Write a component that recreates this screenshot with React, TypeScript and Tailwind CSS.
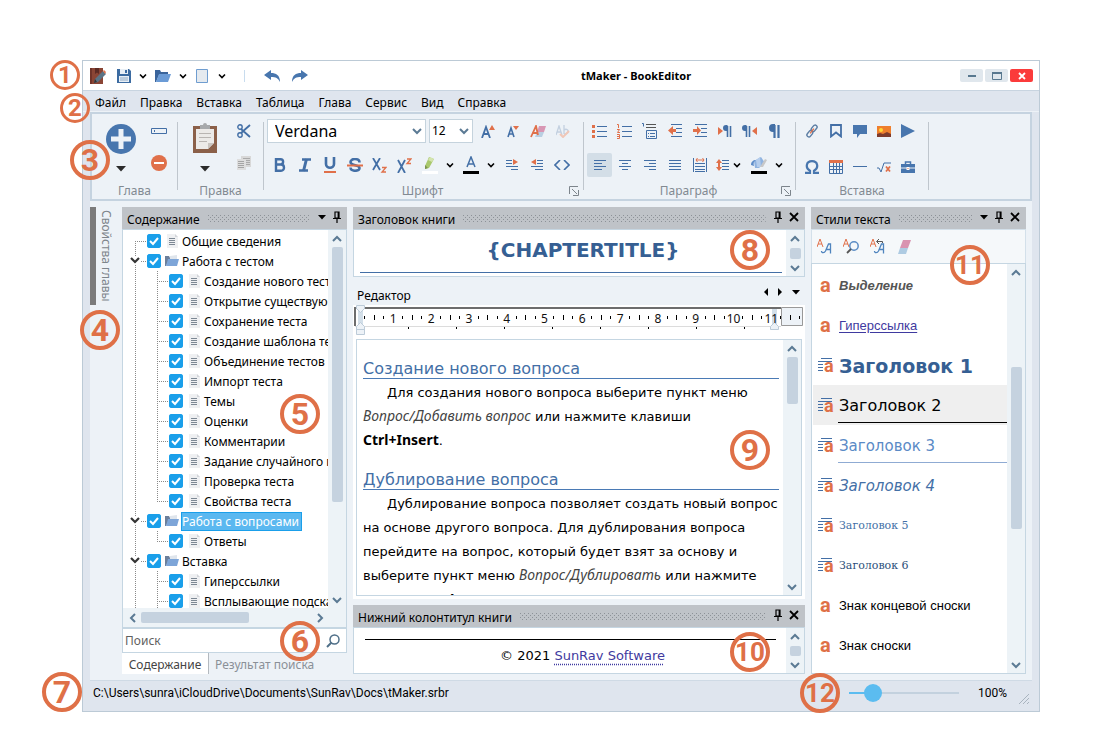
import { useState } from "react";
import type { ReactNode } from "react";
import clsx from "clsx";

const Icon = ({
  w = 16,
  h = 16,
  children,
}: {
  w?: number;
  h?: number;
  children: ReactNode;
}) => (
  <svg
    width={w}
    height={h}
    viewBox={`0 0 ${w} ${h}`}
    fill="none"
    className="shrink-0"
    aria-hidden="true"
  >
    {children}
  </svg>
);

const BLUE = "#436fa6";
const ORANGE = "#e0704a";

const Badge = ({ n, className }: { n: number; className: string }) => (
  <span
    className={clsx(
      "pointer-events-none absolute z-20 flex items-center justify-center rounded-full border-[#df7047] font-[Roboto,sans-serif] font-bold leading-none text-[#df7047]",
      n < 3 ? "size-[30px] border-3 text-2xl" : "size-10 border-4",
      n >= 3 && n < 10 && "text-[32px]",
      n >= 10 && "text-[26px]",
      className,
    )}
  >
    {n}
  </span>
);

/* small chevrons and glyphs */

const Chevron = ({
  dir = "down",
  color = "#5b7a94",
}: {
  dir?: "up" | "down" | "left" | "right";
  color?: string;
}) => {
  const d = {
    down: "M1 3l4 4 4-4",
    up: "M1 7l4-4 4 4",
    left: "M7 1L3 5l4 4",
    right: "M3 1l4 4-4 4",
  }[dir];
  return (
    <Icon w={10} h={10}>
      <path d={d} stroke={color} strokeWidth="2" />
    </Icon>
  );
};

const Drop = () => (
  <Icon w={8} h={8}>
    <path d="M1 2.5l3 3 3-3" stroke="#000" strokeWidth="1.6" />
  </Icon>
);

const Caret = () => (
  <Icon w={8} h={5}>
    <path d="M0 0h8L4 4.500z" fill="#000" />
  </Icon>
);

const BigCaret = () => (
  <Icon w={10} h={6}>
    <path d="M0 0h10L5 5.500z" fill="#2b2b2b" />
  </Icon>
);

const Pin = () => (
  <Icon w={8} h={12}>
    <path d="M2 1h4v6H2zM5.2 1v6M0 7.5h8M4 8v4" stroke="#000" strokeWidth="1.2" />
  </Icon>
);

const Cross = () => (
  <Icon w={10} h={10}>
    <path d="M1 1l8 8M9 1L1 9" stroke="#000" strokeWidth="1.8" />
  </Icon>
);

const Tool = ({
  label,
  active,
  className = "h-6 w-[25px]",
  children,
}: {
  label: string;
  active?: boolean;
  className?: string;
  children: ReactNode;
}) => (
  <button
    type="button"
    aria-label={label}
    className={clsx(
      "flex shrink-0 items-center justify-center rounded-xs",
      active && "bg-[#d3dee7]",
      className,
    )}
  >
    {children}
  </button>
);

/* horizontal strokes used by most paragraph icons: [x1, x2, y] */
const Lines = ({ rows, color = BLUE }: { rows: number[][]; color?: string }) => (
  <>
    {rows.map(([a, b, y]) => (
      <path key={`${a}-${y}`} d={`M${a} ${y}.5H${b}`} stroke={color} />
    ))}
  </>
);

const BookIcon = () => (
  <Icon>
    <path d="M0 0h13v16H0z" fill="#8a4535" />
    <path d="M0 0h2v16H0z" fill="#6f3329" />
    <path d="M5 0h4v6L7 4.500 5 6z" fill="#5b2a24" />
    <path d="M4 15l1-4 8-8 3 3-8 8z" fill="#5b7385" />
    <path d="M13 3l1-1 2 2-1 2z" fill="#e0704a" />
    <path d="M4 15l1-4 2 3z" fill="#333" />
  </Icon>
);

const SaveIcon = () => (
  <Icon w={14} h={14}>
    <path d="M0 0h12l2 2v12H0z" fill="#3c6ba1" />
    <path d="M3 0h8v5H3z" fill="#e8eff6" />
    <path d="M8 1h2v3H8z" fill="#3c6ba1" />
    <path d="M2 7h10v6H2z" fill="#e8eff6" />
    <path d="M3 9h8M3 11h8" stroke="#8fa9c4" />
  </Icon>
);

const FolderIcon = () => (
  <Icon w={16} h={12}>
    <path d="M0 0h5l1 2h7v3H4L1 12H0z" fill="#3a649b" />
    <path d="M4 4h12l-3 8H1z" fill="#6b9bd6" />
  </Icon>
);

const ChapterIcon = () => (
  <Icon w={14} h={12}>
    <path d="M0 1h4l1 2h6v2H4L1 11H0z" fill="#6c7f9b" />
    <path d="M5 1l7-1v5H5z" fill="#dfe5ec" />
    <path d="M3 4h11l-2 7H1z" fill="#7da5d8" />
  </Icon>
);

const PageIcon = () => (
  <Icon w={12} h={14}>
    <path d="M.5.500H11.500V13.500H.5z" fill="#e5eaef" stroke="#6f9dd0" />
  </Icon>
);

const DocIcon = () => (
  <Icon w={12} h={14}>
    <path d="M1 0h8l3 3v11H1z" fill="#eff0f2" />
    <path d="M9 0l3 3H9z" fill="#d3d6da" />
    <path d="M3 4.500h6M3 6.500h6M3 8.500h6M3 10.500h6" stroke="#7d8894" />
  </Icon>
);

const UndoIcon = ({ flip }: { flip?: boolean }) => (
  <Icon w={16} h={12}>
    <g transform={flip ? "translate(16 0) scale(-1 1)" : undefined}>
      <path d="M0 5l7-5v3c5 0 9 2 9 9-2-4-4-5-9-5v3z" fill="#4876ae" />
    </g>
  </Icon>
);

const TitleBar = () => (
  <header className="relative flex h-[30px] shrink-0 items-center border-b border-[#c8d4e0] bg-white pl-[7px] pr-[6px]">
    <Badge n={1} className="-left-[33px] -top-px" />
    <BookIcon />
    <div className="ml-[11px] flex items-center gap-2">
      <button type="button" aria-label="Сохранить">
        <SaveIcon />
      </button>
      <Drop />
      <button type="button" aria-label="Открыть">
        <FolderIcon />
      </button>
      <Drop />
      <button type="button" aria-label="Создать" className="ml-px mr-[2px]">
        <PageIcon />
      </button>
      <Drop />
    </div>
    <span className="ml-[18px] h-3 w-px bg-[#c8dcee]" />
    <button type="button" aria-label="Отменить" className="ml-[19px]">
      <UndoIcon />
    </button>
    <button type="button" aria-label="Повторить" className="ml-3">
      <UndoIcon flip />
    </button>
    <h1 className="flex-1 pl-1 pt-px text-center text-[11px] font-bold">
      tMaker - BookEditor
    </h1>
    <div className="flex gap-[2px]">
      <button
        type="button"
        aria-label="Свернуть"
        className="flex h-[13px] w-[23px] items-center justify-center rounded-xs bg-[#e0e7ed]"
      >
        <Icon w={8} h={8}>
          <path d="M0 4h8" stroke="#58788f" strokeWidth="2" />
        </Icon>
      </button>
      <button
        type="button"
        aria-label="Развернуть"
        className="flex h-[13px] w-[23px] items-center justify-center rounded-xs bg-[#e0e7ed]"
      >
        <Icon w={10} h={8}>
          <path d="M.5 1h9v6.500h-9z" stroke="#58788f" />
          <path d="M0 1h10" stroke="#58788f" strokeWidth="2" />
        </Icon>
      </button>
      <button
        type="button"
        aria-label="Закрыть"
        className="flex h-[13px] w-[23px] items-center justify-center rounded-xs bg-[#fb3b3b]"
      >
        <Icon w={8} h={8}>
          <path d="M1 1l6 6M7 1L1 7" stroke="#fff" strokeWidth="1.800" />
        </Icon>
      </button>
    </div>
  </header>
);

const menu = ["Файл", "Правка", "Вставка", "Таблица", "Глава", "Сервис", "Вид", "Справка"];

const MenuBar = () => (
  <nav className="relative flex h-[21px] shrink-0 items-center gap-[14px] border-b border-[#edf2f7] pl-3 pt-[3px]">
    <Badge n={2} className="-left-[23px] top-[2px]" />
    {menu.map((item) => (
      <a key={item} href="#" className="leading-4">
        {item}
      </a>
    ))}
  </nav>
);

const Group = ({
  title,
  launcher,
  className,
  children,
}: {
  title: string;
  launcher?: boolean;
  className: string;
  children: ReactNode;
}) => (
  <>
    <section className={clsx("flex shrink-0 flex-col pt-[5px]", className)}>
      {children}
      <div className="flex h-[22px] items-center justify-center pt-[5px] text-[#828a92]">
        <h2 className={clsx(launcher && "flex-1 pl-3 text-center")}>{title}</h2>
        {launcher && (
          <button type="button" aria-label={`${title}: параметры`} className="mr-1">
            <Icon w={10} h={10}>
              <path d="M.5 8V.5H9M3 3l5 5M9.500 4v5.500H4" stroke="#7d858c" />
            </Icon>
          </button>
        )}
      </div>
    </section>
    <span className="mb-[9px] mt-2 w-px shrink-0 bg-[#bfc6cd]" />
  </>
);

const Ribbon = () => (
  <div className="relative mx-[7px] flex shrink-0 border-2 border-[#c5d3e0] bg-[#edf2f7]">
    <Badge n={3} className="-left-[22px] top-[26px]" />

    <Group title="Глава" className="w-[85px]">
      <div className="flex h-[58px] gap-[10px] pl-[14px]">
        <button
          type="button"
          aria-label="Добавить главу"
          className="flex flex-col items-center gap-3 pt-[5px]"
        >
          <Icon w={30} h={30}>
            <circle cx="15" cy="15" r="15" fill="#4876ae" />
            <path d="M15 5v20M5 15h20" stroke="#edf2f7" strokeWidth="5" />
          </Icon>
          <BigCaret />
        </button>
        <div className="flex flex-col gap-2">
          <Tool label="Свойства">
            <Icon w={16} h={6}>
              <path d="M.5.500h15v5H.5zM3.500 2v2" stroke={BLUE} />
            </Icon>
          </Tool>
          <Tool label="Удалить главу">
            <Icon>
              <circle cx="8" cy="8" r="8" fill={ORANGE} />
              <path d="M3 8h10" stroke="#fff" strokeWidth="2" />
            </Icon>
          </Tool>
        </div>
      </div>
    </Group>

    <Group title="Правка" className="w-[85px]">
      <div className="flex h-[58px] gap-[13px] pl-[14px]">
        <button
          type="button"
          aria-label="Вставить"
          className="flex flex-col items-center gap-[13px] pt-1"
        >
          <Icon w={26} h={30}>
            <path d="M1 3h24v27H1z" fill="#8b6049" />
            <path d="M4 6h18v14l-6 6H4z" fill="#eceae8" />
            <path d="M22 20h-6v6z" fill="#c9c4c0" />
            <path d="M7 10.500h12M7 14.500h12M7 18.500h8" stroke="#b9b5b2" />
            <path d="M8 2h3a2 2 0 014 0h3v4H8z" fill="#a6a9ac" />
          </Icon>
          <BigCaret />
        </button>
        <div className="flex flex-col gap-2">
          <Tool label="Вырезать">
            <Icon w={14} h={14}>
              <path d="M13 1L4 9M13 13L4 5" stroke={BLUE} strokeWidth="1.800" />
              <circle cx="3" cy="3" r="2.200" stroke={BLUE} strokeWidth="1.400" />
              <circle cx="3" cy="11" r="2.200" stroke={BLUE} strokeWidth="1.400" />
            </Icon>
          </Tool>
          <Tool label="Копировать">
            <Icon w={14} h={14}>
              <path d="M4 0h10v11H4z" fill="#d8d8d8" />
              <path d="M6 2.500h7M6 4.500h7M6 6.500h7M6 8.500h7" stroke="#aaa" />
              <path d="M0 3h9v11H0z" fill="#dedede" />
              <path d="M1 5.500h6M1 7.500h6M1 9.500h6M1 11.500h6" stroke="#a5a5a5" />
            </Icon>
          </Tool>
        </div>
      </div>
    </Group>

    <Group title="Шрифт" launcher className="w-[319px]">
      <div className="flex h-6 pl-[3px]">
        <label className="relative mr-[3px] w-[159px]">
          <select
            aria-label="Шрифт"
            className="h-6 w-full appearance-none border border-[#c5d3dd] bg-white pl-[7px] text-base leading-none"
          >
            <option>Verdana</option>
          </select>
          <span className="pointer-events-none absolute right-1 top-[7px]">
            <Chevron />
          </span>
        </label>
        <label className="relative mr-[2px] w-11">
          <select
            aria-label="Размер"
            className="h-6 w-full appearance-none border border-[#c5d3dd] bg-white pl-[2px] leading-none"
          >
            <option>12</option>
          </select>
          <span className="pointer-events-none absolute right-1 top-[7px]">
            <Chevron />
          </span>
        </label>
        <Tool label="Увеличить шрифт">
          <Icon w={14} h={13}>
            <path d="M1 13L5 2l4 11M2 9h6" stroke={BLUE} strokeWidth="1.800" />
            <path d="M8 5l3-5 3 5z" fill={ORANGE} />
          </Icon>
        </Tool>
        <Tool label="Уменьшить шрифт">
          <Icon w={12} h={13}>
            <path d="M1 12L4 3l3 9M2 9h4" stroke={BLUE} strokeWidth="1.600" />
            <path d="M6 1h6L9 5z" fill={ORANGE} />
          </Icon>
        </Tool>
        <Tool label="Очистить формат">
          <Icon w={16} h={13}>
            <path d="M9 1h7l-2 6H7z" fill="#d897b4" />
            <path d="M7 7h7l-2 5H5z" fill="#b9cfe2" />
            <path d="M1 12L6 1l2 9M3 8h5" stroke={ORANGE} strokeWidth="1.800" />
          </Icon>
        </Tool>
        <Tool label="Проверка">
          <Icon w={14} h={13}>
            <path d="M0 10L3 1l3 9M1 7h4M8 0v9M8 5c4-3 7 4 0 4" stroke="#c3d0e0" strokeWidth="1.300" />
            <path d="M4 9l3 3 6-6" stroke="#f0c7b8" strokeWidth="2" />
          </Icon>
        </Tool>
      </div>
      <div className="mt-[10px] flex h-6 pl-[3px]">
        <Tool label="Полужирный">
          <Icon w={12} h={14}>
            <path
              d="M2 1.200h4.500c3.500 0 3.500 5.300 0 5.300H2h5c4 0 4 6.300 0 6.300H2z"
              stroke={BLUE}
              strokeWidth="2.400"
            />
          </Icon>
        </Tool>
        <Tool label="Курсив">
          <Icon w={12} h={14}>
            <path d="M3 1.500h9M0 12.500h9" stroke={BLUE} strokeWidth="2.400" />
            <path d="M7.500 1L4.500 13" stroke={BLUE} strokeWidth="3" />
          </Icon>
        </Tool>
        <Tool label="Подчёркнутый">
          <Icon w={12} h={16}>
            <path d="M2 0v7c0 5 8 5 8 0V0" stroke={BLUE} strokeWidth="2.600" />
            <path d="M0 15h12" stroke={ORANGE} strokeWidth="2" />
          </Icon>
        </Tool>
        <Tool label="Зачёркнутый">
          <Icon w={16} h={14}>
            <path
              d="M12.500 4.500C12.500 0 3.500 0 3.500 4s9 2.500 9 6-9 4-9-.5"
              stroke={BLUE}
              strokeWidth="2.600"
            />
            <path d="M0 7.500h16" stroke={ORANGE} strokeWidth="2" />
          </Icon>
        </Tool>
        <Tool label="Нижний индекс">
          <Icon w={15} h={15}>
            <path d="M1 0l7 12M8 0L1 12" stroke={BLUE} strokeWidth="1.800" />
            <path d="M10 9.500h4l-4 4.500h4" stroke={ORANGE} strokeWidth="1.300" />
          </Icon>
        </Tool>
        <Tool label="Верхний индекс">
          <Icon w={15} h={15}>
            <path d="M1 2l7 13M8 2L1 15" stroke={BLUE} strokeWidth="1.800" />
            <path d="M10 1h4l-4 4.500h4" stroke={ORANGE} strokeWidth="1.300" />
          </Icon>
        </Tool>
        <Tool label="Цвет выделения">
          <Icon w={16} h={18}>
            <path d="M7 1l5 2-5 9-4 1 0-3z" fill="#a9c86c" />
            <path d="M8 1l4 2-2 3-4-2z" fill="#d3e4ae" />
            <path d="M3 9l3 3-3 1z" fill="#7d9350" />
            <path d="M0 15h16v3H0z" fill="#fff" />
          </Icon>
        </Tool>
        <Tool label="Выбрать цвет выделения" className="h-6 w-4">
          <Drop />
        </Tool>
        <Tool label="Цвет текста">
          <Icon w={16} h={18}>
            <path d="M4 11L8 1l4 10M5 8h6" stroke={BLUE} strokeWidth="1.500" />
            <path d="M0 15h16v3H0z" fill="#000" />
          </Icon>
        </Tool>
        <Tool label="Выбрать цвет текста" className="h-6 w-4">
          <Drop />
        </Tool>
        <Tool label="Отступ справа">
          <Icon w={12} h={12}>
            <Lines rows={[[0, 6, 1], [0, 6, 4], [0, 12, 7], [5, 12, 10]]} />
            <path d="M7 0l5 3-5 3z" fill={ORANGE} />
          </Icon>
        </Tool>
        <Tool label="Отступ слева">
          <Icon w={12} h={12}>
            <Lines rows={[[6, 12, 1], [6, 12, 4], [0, 12, 7], [4, 12, 10]]} />
            <path d="M5 0L0 3l5 3z" fill={ORANGE} />
          </Icon>
        </Tool>
        <Tool label="Код">
          <Icon w={16} h={10}>
            <path d="M6 0L1 5l5 5M10 0l5 5-5 5" stroke={BLUE} strokeWidth="1.600" />
          </Icon>
        </Tool>
      </div>
    </Group>

    <Group title="Параграф" launcher className="w-[211px]">
      <div className="flex h-6 pl-[3px]">
        <Tool label="Маркированный список">
          <Icon w={15} h={13}>
            <Lines rows={[[5, 15, 1], [5, 15, 6], [5, 15, 11]]} />
            <path d="M0 0h3v3H0zM0 5h3v3H0zM0 10h3v3H0z" fill={ORANGE} />
          </Icon>
        </Tool>
        <Tool label="Нумерованный список">
          <Icon w={15} h={15}>
            <Lines rows={[[5, 15, 2], [5, 15, 7], [5, 15, 12]]} />
            <path
              d="M0 .5h1.500V4M0 5.500h2.500L.5 8.500h2.500M0 10.500h2.500v4H0M0 12.500h2.500"
              stroke={ORANGE}
            />
          </Icon>
        </Tool>
        <Tool label="Многоуровневый список">
          <Icon w={15} h={16}>
            <path d="M0 .5h1.500v3" stroke={BLUE} />
            <Lines rows={[[4, 14, 1], [4, 14, 4]]} color="#555" />
            <path d="M4.500 7.500h10v8h-10z" stroke={BLUE} />
            <path d="M6 10.500h1M8 10.500h5M6 13.500h1M8 13.500h5" stroke={BLUE} />
          </Icon>
        </Tool>
        <Tool label="Уменьшить отступ">
          <Icon w={14} h={14}>
            <Lines rows={[[3, 14, 0], [8, 14, 4], [8, 14, 8], [3, 14, 12]]} />
            <path d="M0 6.500L5 2v3h3v3H5v3z" fill={ORANGE} />
          </Icon>
        </Tool>
        <Tool label="Увеличить отступ">
          <Icon w={14} h={14}>
            <Lines rows={[[2, 14, 0], [8, 14, 4], [8, 14, 8], [2, 14, 12]]} />
            <path d="M8 6.500L4 2v3H0v3h4v3z" fill={ORANGE} />
          </Icon>
        </Tool>
        <Tool label="Слева направо">
          <Icon w={14} h={12}>
            <path d="M0 2l5 4-5 4z" fill={ORANGE} />
            <path d="M14 0H8a3 3 0 000 6h1.500V0z" fill={BLUE} />
            <path d="M9.500 1v11M12.500 1v11" stroke={BLUE} strokeWidth="1.600" />
          </Icon>
        </Tool>
        <Tool label="Справа налево">
          <Icon w={15} h={12}>
            <path d="M15 2l-5 4 5 4z" fill={ORANGE} />
            <path d="M9 0H3a3 3 0 000 6h1.500V0z" fill={BLUE} />
            <path d="M4.500 1v11M7.500 1v11" stroke={BLUE} strokeWidth="1.600" />
          </Icon>
        </Tool>
        <Tool label="Непечатаемые знаки">
          <Icon w={12} h={14}>
            <path d="M12 0H4a4 4 0 000 8h2V0z" fill={BLUE} />
            <path d="M5.500 1v13M9.500 1v13" stroke={BLUE} strokeWidth="2.200" />
          </Icon>
        </Tool>
      </div>
      <div className="mt-[10px] flex h-6 pl-[3px]">
        <Tool label="По левому краю" active>
          <Icon w={12} h={11}>
            <Lines rows={[[0, 12, 0], [0, 8, 3], [0, 12, 6], [0, 8, 9]]} />
          </Icon>
        </Tool>
        <Tool label="По центру">
          <Icon w={12} h={11}>
            <Lines rows={[[0, 12, 0], [3, 9, 3], [0, 12, 6], [3, 9, 9]]} />
          </Icon>
        </Tool>
        <Tool label="По правому краю">
          <Icon w={12} h={11}>
            <Lines rows={[[0, 12, 0], [5, 12, 3], [0, 12, 6], [5, 12, 9]]} />
          </Icon>
        </Tool>
        <Tool label="По ширине">
          <Icon w={12} h={11}>
            <Lines rows={[[0, 12, 0], [0, 12, 3], [0, 12, 6], [0, 12, 9]]} />
          </Icon>
        </Tool>
        <Tool label="Поля">
          <Icon w={14} h={14}>
            <path d="M.5 0v14M13.500 0v14" stroke={BLUE} />
            <path d="M3 2h8M4.500 0L3 2l1.500 2M9.500 0L11 2 9.500 4" stroke={ORANGE} />
            <Lines rows={[[2, 12, 5], [2, 12, 8], [2, 12, 11], [2, 12, 13]]} />
          </Icon>
        </Tool>
        <Tool label="Интервал" className="h-6 w-5">
          <Icon w={13} h={12}>
            <path d="M0 4l3-4 3 4H4v4h2l-3 4-3-4h2V4z" fill={ORANGE} />
            <Lines rows={[[6, 13, 1], [6, 13, 4], [6, 13, 7], [6, 13, 10]]} />
          </Icon>
        </Tool>
        <Tool label="Выбрать интервал" className="mr-1 h-6 w-[10px]">
          <Drop />
        </Tool>
        <Tool label="Заливка">
          <Icon w={16} h={18}>
            <path d="M3 5l7-4 4 6-6 5H4z" fill="#8fb3e0" />
            <path d="M5 4l4-3 1 10H6z" fill="#b4cdec" />
            <path d="M9 11l5-8 2 1-4 7z" fill="#c8c8c8" />
            <path d="M0 9c0-3 2-5 5-5-2 1-3 3-2 6z" fill="#5d8cc8" />
            <path d="M0 15h16v3H0z" fill="#000" />
          </Icon>
        </Tool>
        <Tool label="Выбрать заливку" className="h-6 w-4">
          <Drop />
        </Tool>
      </div>
    </Group>

    <Group title="Вставка" className="w-[132px]">
      <div className="flex h-6 pl-1">
        <Tool label="Ссылка" className="h-6 w-6">
          <Icon w={12} h={14}>
            <g transform="rotate(38 6 7)" stroke="#5b7da3" strokeWidth="1.400">
              <rect x="4" y="0" width="4" height="7" rx="2" />
              <rect x="4" y="7" width="4" height="7" rx="2" />
              <path d="M6 4v6" stroke={ORANGE} />
            </g>
          </Icon>
        </Tool>
        <Tool label="Закладка" className="h-6 w-6">
          <Icon w={12} h={14}>
            <path d="M1 1h10v11.500L6 8.500l-5 4z" stroke={BLUE} strokeWidth="1.800" />
          </Icon>
        </Tool>
        <Tool label="Комментарий" className="h-6 w-6">
          <Icon w={14} h={13}>
            <path d="M0 0h14v9H7l-3 4V9H0z" fill="#4876ae" />
          </Icon>
        </Tool>
        <Tool label="Рисунок" className="h-6 w-6">
          <Icon w={14} h={11}>
            <path d="M0 0h14v11H0z" fill="#ef7f2d" />
            <circle cx="4" cy="4" r="2" fill="#ffd633" />
            <path d="M0 8l3-1 3 1 4-2 4 2v3H0z" fill="#7e3b2c" />
          </Icon>
        </Tool>
        <Tool label="Видео" className="h-6 w-6">
          <Icon w={14} h={14}>
            <path d="M0 0l14 7-14 7z" fill="#4876ae" />
          </Icon>
        </Tool>
      </div>
      <div className="mt-[14px] flex h-5 pl-1">
        <Tool label="Символ" className="h-5 w-6">
          <Icon w={14} h={14}>
            <path
              d="M0 12.800h5v-2C0 8 1 1.200 7 1.200s7 6.800 2 9.600v2h5"
              stroke="#4876ae"
              strokeWidth="2.200"
            />
          </Icon>
        </Tool>
        <Tool label="Таблица" className="h-5 w-6">
          <Icon w={14} h={14}>
            <path
              d="M.5 1v12.500h13V1M4.500 3v10M7.500 3v10M10.500 3v10M0 6.500h14M0 9.500h14"
              stroke={BLUE}
            />
            <path d="M0 1.500h14" stroke={ORANGE} strokeWidth="3" />
          </Icon>
        </Tool>
        <Tool label="Линия" className="h-5 w-6">
          <Icon w={14} h={2}>
            <path d="M0 .5h14" stroke={BLUE} />
          </Icon>
        </Tool>
        <Tool label="Формула" className="h-5 w-6">
          <Icon w={14} h={11}>
            <path d="M0 6h2l2 4 3-9h7" stroke={BLUE} />
            <path d="M9 4.500l4 5M13 4.500l-4 5" stroke={ORANGE} strokeWidth="1.800" />
          </Icon>
        </Tool>
        <Tool label="Компонент" className="h-5 w-6">
          <Icon w={14} h={12}>
            <path d="M4.500 3V1h5v2" stroke="#4876ae" strokeWidth="1.500" />
            <path d="M0 3h14v9H0z" fill="#4876ae" />
            <path d="M0 7h14" stroke="#edf2f7" />
            <path d="M5.500 6h3v3h-3z" fill="#fff" />
            <path d="M6.500 7h1v1h-1z" fill={ORANGE} />
          </Icon>
        </Tool>
      </div>
    </Group>
  </div>
);

/* docked panels */

const Grip = ({ id }: { id: string }) => (
  <svg className="h-[7px] min-w-0 flex-1" aria-hidden="true">
    <pattern id={id} width="4" height="4" patternUnits="userSpaceOnUse">
      <path d="M0 0h1v1H0zM2 2h1v1H2z" fill="#8d9298" />
    </pattern>
    <rect width="100%" height="100%" fill={`url(#${id})`} />
  </svg>
);

const PanelHeader = ({
  title,
  id,
  menu,
  close,
}: {
  title: string;
  id: string;
  menu?: boolean;
  close?: boolean;
}) => (
  <div className="flex h-[22px] shrink-0 items-center gap-2 bg-[#bfc3c8] pl-[5px] pr-[6px]">
    <h2 className="pt-[3px] leading-4">{title}</h2>
    <Grip id={id} />
    <div className="flex items-center gap-[7px] pb-[2px]">
      {menu && (
        <button type="button" aria-label="Меню">
          <Caret />
        </button>
      )}
      <button type="button" aria-label="Закрепить">
        <Pin />
      </button>
      {close && (
        <button type="button" aria-label="Закрыть панель">
          <Cross />
        </button>
      )}
    </div>
  </div>
);

const ScrollBar = ({
  space = 0,
  thumb,
}: {
  space?: number;
  thumb: number;
}) => (
  <div className="flex w-[18px] shrink-0 flex-col items-center justify-between bg-[#edf3f7] pb-[3px] pt-1">
    <Chevron dir="up" />
    <div className="flex w-full flex-1 flex-col items-center py-[3px]">
      <span style={{ flexGrow: space }} />
      <span
        className="w-[11px] rounded-xs bg-[#c5d2df]"
        style={{ flexGrow: thumb }}
      />
      <span style={{ flexGrow: 100 - space - thumb }} />
    </div>
    <Chevron dir="down" />
  </div>
);

type Node = { title: string; children?: string[]; selected?: boolean };

const tree: Node[] = [
  { title: "Общие сведения" },
  {
    title: "Работа с тестом",
    children: [
      "Создание нового теста",
      "Открытие существующего теста",
      "Сохранение теста",
      "Создание шаблона теста",
      "Объединение тестов",
      "Импорт теста",
      "Темы",
      "Оценки",
      "Комментарии",
      "Задание случайного порядка",
      "Проверка теста",
      "Свойства теста",
    ],
  },
  { title: "Работа с вопросами", children: ["Ответы"], selected: true },
  { title: "Вставка", children: ["Гиперссылки", "Всплывающие подсказки", "Рисунки"] },
];

const Guide = ({ path, open }: { path: string; open?: boolean }) => (
  <Icon w={22} h={20}>
    <path d={path} stroke="#8a8a8a" strokeDasharray="1 1" />
    {open && (
      <>
        <path d="M6 5h10v9H6z" fill="#fff" />
        <path d="M7 7l4 4 4-4" stroke="#333" strokeWidth="2.200" />
      </>
    )}
  </Icon>
);

const Check = ({ label }: { label: string }) => (
  <span className="grid size-[14px] shrink-0">
    <input
      type="checkbox"
      defaultChecked
      aria-label={label}
      className="peer col-start-1 row-start-1 size-[14px] appearance-none rounded-[3px] bg-white ring-1 ring-[#1a9fea] ring-inset checked:bg-[#1a9fea]"
    />
    <svg
      viewBox="0 0 14 14"
      fill="none"
      className="pointer-events-none invisible col-start-1 row-start-1 size-[14px] peer-checked:visible"
    >
      <path d="M3 7l3 3 5-6" stroke="#fff" strokeWidth="2" />
    </svg>
  </span>
);

const TreeItem = ({
  title,
  folder,
  selected,
}: {
  title: string;
  folder?: boolean;
  selected?: boolean;
}) => (
  <span className="ml-px flex items-center">
    <Check label={title} />
    <span className="ml-1 mr-[3px] flex w-[14px] justify-center">
      {folder ? <ChapterIcon /> : <DocIcon />}
    </span>
    <span
      className={clsx(
        "pr-[2px] pt-px leading-4",
        selected && "bg-[#5bb8f0] text-white outline outline-[#1a9fea]",
      )}
    >
      {title}
    </span>
  </span>
);

const Tree = () => (
  <ul className="min-w-0 flex-1 overflow-hidden whitespace-nowrap pl-px pt-px">
    {tree.map((node, i) => (
      <li key={node.title}>
        <div className="flex h-5 items-center">
          <Guide
            path={i === 0 ? "M11.500 10v10M11 10.500h11" : "M11.500 0v20M11 10.500h11"}
            open={Boolean(node.children)}
          />
          <TreeItem
            title={node.title}
            folder={Boolean(node.children)}
            selected={node.selected}
          />
        </div>
        {node.children && (
          <ul>
            {node.children.map((child, j) => (
              <li key={child} className="flex h-5 items-center">
                <Guide path="M11.500 0v20" />
                <Guide
                  path={
                    j === node.children!.length - 1
                      ? "M11.500 0v11M11 10.500h11"
                      : "M11.500 0v20M11 10.500h11"
                  }
                />
                <TreeItem title={child} />
              </li>
            ))}
          </ul>
        )}
      </li>
    ))}
  </ul>
);

const ContentsPanel = () => (
  <section className="relative flex w-[225px] shrink-0 flex-col">
    <Badge n={5} className="right-[27px] top-[187px]" />
    <PanelHeader title="Содержание" id="grip-contents" menu />
    <div className="flex min-h-0 flex-1 flex-col border border-[#c5d6e2] bg-white">
      <div className="flex min-h-0 flex-1">
        <Tree />
        <ScrollBar thumb={74} />
      </div>
      <div className="flex h-[19px] shrink-0 items-center bg-[#edf3f7] pl-[5px] pr-[21px]">
        <Chevron dir="left" />
        <div className="flex flex-1 px-[3px]">
          <span className="h-[11px] w-[108px] rounded-xs bg-[#c5d2df]" />
        </div>
        <Chevron dir="right" />
      </div>
    </div>
    <form className="relative flex h-[25px] shrink-0 items-center border border-[#c5d6e2] bg-white pr-[6px]">
      <Badge n={6} className="-top-2 right-[26px]" />
      <input
        type="search"
        aria-label="Поиск"
        placeholder="Поиск"
        className="min-w-0 flex-1 pl-[2px] placeholder:text-[#5f5f5f]"
      />
      <button type="button" aria-label="Найти">
        <Icon w={14} h={14}>
          <circle cx="8.500" cy="5.500" r="4.500" stroke="#4f6f88" strokeWidth="1.500" />
          <path d="M5.500 8.500L1 13" stroke="#4f6f88" strokeWidth="2" />
        </Icon>
      </button>
    </form>
    <div role="tablist" className="flex h-[21px] shrink-0 leading-5">
      <button
        type="button"
        role="tab"
        aria-selected="true"
        className="w-[87px] border-r border-[#b3b9bf] bg-white pt-[3px] leading-4 text-[#444]"
      >
        Содержание
      </button>
      <button
        type="button"
        role="tab"
        aria-selected="false"
        className="pl-[6px] pt-[3px] leading-4 text-[#8a9097]"
      >
        Результат поиска
      </button>
    </div>
  </section>
);

const Ruler = () => {
  const marks = Array.from({ length: 46 }, (_, i) => i + 1);
  const tabs = Array.from({ length: 8 }, (_, i) => i);
  return (
    <svg
      viewBox="0 0 452 32"
      className="h-8 w-full shrink-0"
      preserveAspectRatio="xMinYMin meet"
      role="img"
      aria-label="Линейка"
    >
      <path d="M428 2h22v19h-22z" fill="#edf2f7" />
      <path d="M428.500 2.500h21v18h-21z" fill="none" stroke="#999" />
      <path d="M2 21V3h426" fill="none" stroke="#6d6d6d" strokeWidth="2" />
      <path d="M2 21.500h426" stroke="#dcdcdc" />
      <path d="M5 2h5v26H5zM419 4h5v17h-5z" fill="#d3dfe9" />
      <path
        d="M3.500.500h8v3l-4 4-4-4zM3.500 29.500v-8l4-4 4 4v8zM3.500 24.500h8"
        fill="#edf2f7"
        stroke="#bccbd8"
      />
      <path d="M417.500 24.500v-3l4-4 4 4v3z" fill="#edf2f7" stroke="#bccbd8" />
      {marks.map((i) => {
        const x = 2.5 + i * 9.45;
        if (i % 4 === 0)
          return (
            <text
              key={i}
              x={x}
              y={18}
              fontSize="12"
              textAnchor="middle"
              fill="#111"
            >
              {i / 4}
            </text>
          );
        const half = i % 2 === 0;
        return (
          <rect
            key={i}
            x={Math.round(x - 0.5)}
            y={half ? 10 : 11}
            width="1"
            height={half ? 5 : 3}
            fill="#000"
          />
        );
      })}
      <path d="M446.500 11v3" stroke="#000" />
      {tabs.map((i) => (
        <rect key={i} x={55 + i * 48} y={22} width="1" height="2" fill="#000" />
      ))}
    </svg>
  );
};

const verdana = "font-['DejaVu_Sans',sans-serif]";
const chapterHeading =
  "border-b border-[#4a7ab5] pt-1 text-base leading-[18px] text-[#436fa6]";
const menuPath = "font-['Noto_Sans',sans-serif] text-sm leading-none text-[#444]";

const EditorPanel = () => (
  <section className="relative flex min-h-0 flex-1 flex-col">
    <div className="flex h-7 shrink-0 items-center pl-1 pr-[5px]">
      <h2 className="flex-1 pt-[10px] leading-4">Редактор</h2>
      <div className="flex items-center gap-[10px] pt-[2px]">
        <button type="button" aria-label="Назад">
          <Icon w={4} h={8}>
            <path d="M4 0v8L0 4z" fill="#000" />
          </Icon>
        </button>
        <button type="button" aria-label="Вперёд">
          <Icon w={4} h={8}>
            <path d="M0 0v8l4-4z" fill="#000" />
          </Icon>
        </button>
        <button type="button" aria-label="Список">
          <Caret />
        </button>
      </div>
    </div>
    <div className="relative flex min-h-0 flex-1 flex-col bg-white pb-[3px]">
      <Badge n={9} className="right-[35px] top-[125px]" />
      <Ruler />
      <div className="mx-[3px] mt-[2px] flex min-h-0 flex-1 border border-[#c5d6e2]">
        <article
          className={clsx(
            "min-w-0 flex-1 overflow-hidden whitespace-nowrap pl-[6px] pr-1 pt-4 text-[13px] leading-6",
            verdana,
          )}
        >
          <h3 className={chapterHeading}>Создание нового вопроса</h3>
          <p className="pt-[2px] indent-6">
            Для создания нового вопроса выберите пункт меню
            <br />
            <em className={menuPath}>Вопрос/Добавить вопрос</em> или нажмите клавиши
            <br />
            <strong className="font-['Noto_Sans',sans-serif] text-sm leading-none">
              Ctrl+Insert
            </strong>
            .
          </p>
          <h3 className={clsx("mt-[14px]", chapterHeading)}>Дублирование вопроса</h3>
          <p className="pt-[2px] indent-6">
            Дублирование вопроса позволяет создать новый вопрос
            <br />
            на основе другого вопроса. Для дублирования вопроса
            <br />
            перейдите на вопрос, который будет взят за основу и
            <br />
            выберите пункт меню <em className={menuPath}>Вопрос/Дублировать</em> или
            нажмите
            <br />
            клавиши <strong>Ctrl+D</strong>.
          </p>
        </article>
        <ScrollBar thumb={21} />
      </div>
    </div>
  </section>
);

const Center = () => (
  <main className="flex min-w-0 flex-1 flex-col">
    <section className="relative shrink-0">
      <Badge n={8} className="right-[35px] top-[23px]" />
      <PanelHeader title="Заголовок книги" id="grip-header" close />
      <div className="flex h-12 border border-[#c5d6e2] bg-white">
        <div className="flex-1 pb-1 pl-[6px] pr-1">
          <p
            className={clsx(
              "h-[43px] border-b border-[#436fa6] pl-6 pt-[6px] text-center text-xl leading-7 font-bold text-[#365f93]",
              verdana,
            )}
          >
            {"{CHAPTERTITLE}"}
          </p>
        </div>
        <ScrollBar space={10} thumb={80} />
      </div>
    </section>
    <EditorPanel />
    <section className="relative mt-[6px] shrink-0">
      <Badge n={10} className="right-[35px] top-[27px]" />
      <PanelHeader title="Нижний колонтитул книги" id="grip-footer" close />
      <div className="flex h-[47px] border border-[#c5d6e2] bg-white">
        <div className="flex-1 pl-[11px] pr-[10px] pt-[11px]">
          <p
            className={clsx(
              "border-t border-black pl-6 pt-1 text-center text-[13px] leading-6",
              verdana,
            )}
          >
            © 2021{" "}
            <a
              href="#"
              className="text-[#3f3aa0] underline decoration-dotted underline-offset-4"
            >
              SunRav Software
            </a>
          </p>
        </div>
        <ScrollBar space={10} thumb={80} />
      </div>
    </section>
  </main>
);

const styles = [
  {
    name: "Выделение",
    css: "font-['Liberation_Sans',sans-serif] font-bold italic text-[13px] text-[#555]",
  },
  {
    name: "Гиперссылка",
    css: "font-['Liberation_Sans',sans-serif] text-[13px] text-[#3f3aa0] underline underline-offset-2",
  },
  {
    name: "Заголовок 1",
    css: "font-['DejaVu_Sans',sans-serif] font-bold text-[19px] text-[#365f93]",
    block: true,
  },
  {
    name: "Заголовок 2",
    css: "font-['DejaVu_Sans',sans-serif] text-base text-black",
    block: true,
    line: "bg-black",
  },
  {
    name: "Заголовок 3",
    css: "font-['DejaVu_Sans',sans-serif] text-[15px] text-[#5a8ac6]",
    block: true,
    line: "bg-[#8fabd3]",
  },
  {
    name: "Заголовок 4",
    css: "font-['DejaVu_Sans',sans-serif] italic text-[15px] text-[#436fa6]",
    block: true,
  },
  {
    name: "Заголовок 5",
    css: "font-['DejaVu_Serif',serif] text-[11px] text-[#436fa6]",
    block: true,
  },
  {
    name: "Заголовок 6",
    css: "font-['DejaVu_Serif',serif] text-[11px] text-[#2c4f7a]",
    block: true,
  },
  {
    name: "Знак концевой сноски",
    css: "font-['Liberation_Sans',sans-serif] text-[13px] text-black",
  },
  {
    name: "Знак сноски",
    css: "font-['Liberation_Sans',sans-serif] text-[13px] text-black",
  },
];

const StylesPanel = () => {
  const [current, setCurrent] = useState("Заголовок 2");
  return (
    <section className="relative flex w-[215px] shrink-0 flex-col">
      <Badge n={11} className="right-9 top-[38px]" />
      <PanelHeader title="Стили текста" id="grip-styles" menu close />
      <div className="flex h-[34px] shrink-0 items-center gap-[11px] border-x border-t border-[#d3e0ea] bg-[#f5f8fa] pl-[5px]">
        <button type="button" aria-label="Стили">
          <Icon w={15} h={15}>
            <path d="M0 8l3-8 3 8M1 5h4" stroke={ORANGE} />
            <path
              d="M9 10.500h5M4.500 12c0 2.500 3 2 4 0l3-7h2v9.500"
              stroke="#4f84be"
              strokeWidth="1.300"
            />
          </Icon>
        </button>
        <button type="button" aria-label="Найти стиль">
          <Icon w={16} h={15}>
            <path d="M0 8l3-8 3 8M1 5h4" stroke={ORANGE} />
            <circle cx="11" cy="7" r="4.200" stroke="#5b8cc4" strokeWidth="1.500" />
            <path d="M8 10l-4 4" stroke="#555" strokeWidth="1.800" />
          </Icon>
        </button>
        <button type="button" aria-label="Заменить стиль">
          <Icon w={15} h={15}>
            <path d="M0 8l3-8 3 8M1 5h4" stroke={ORANGE} />
            <path
              d="M9 10.500h5M4.500 12c0 2.500 3 2 4 0l3-7h2v9.500"
              stroke="#4f84be"
              strokeWidth="1.300"
            />
            <path d="M12.500 4V2.500H7M9 0L6.500 2.500 9 5" stroke="#555" />
          </Icon>
        </button>
        <button type="button" aria-label="Очистить стиль" className="ml-[2px]">
          <Icon w={14} h={14}>
            <path d="M5 0h8l-3 8H2z" fill="#d993b0" />
            <path d="M2 8h8l-2 6H0z" fill="#aecbe2" />
          </Icon>
        </button>
      </div>
      <div className="flex min-h-0 flex-1 border border-[#c5d6e2] bg-white">
        <ul className="min-w-0 flex-1 overflow-hidden whitespace-nowrap pl-px pt-px">
          {styles.map((s) => (
            <li key={s.name}>
              <button
                type="button"
                onClick={() => setCurrent(s.name)}
                className={clsx(
                  "flex h-10 w-full pl-[5px] text-left",
                  current === s.name && "bg-[#efefef]",
                )}
              >
                <span className="flex h-10 w-5 items-center">
                  {s.block ? (
                    <span className="relative flex h-[14px] w-full">
                      <Icon w={15} h={14}>
                        <Lines
                          rows={[[3, 14, 0], [0, 14, 3], [0, 5, 6], [0, 5, 9], [0, 5, 12]]}
                        />
                      </Icon>
                      <b className="absolute -bottom-[3px] left-[6px] font-[Roboto,sans-serif] text-lg leading-none text-[#df7047]">
                        a
                      </b>
                    </span>
                  ) : (
                    <b className="pb-px pl-[2px] font-[Roboto,sans-serif] text-xl leading-none text-[#df7047]">
                      a
                    </b>
                  )}
                </span>
                <span className="flex min-w-0 flex-1 flex-col">
                  <span className={clsx("h-10 pl-px leading-[42px]", s.css)}>
                    {s.name}
                  </span>
                  {s.line && <span className={clsx("-mt-[3px] h-px shrink-0", s.line)} />}
                </span>
              </button>
            </li>
          ))}
        </ul>
        <ScrollBar space={23} thumb={43} />
      </div>
    </section>
  );
};

const StatusBar = () => (
  <footer className="relative flex h-[30px] shrink-0 items-center pb-[6px] pl-[10px] pr-[10px]">
    <Badge n={7} className="-left-[41px] -top-[9px]" />
    <span className="flex-1 font-[Roboto,sans-serif]">
      C:\Users\sunra\iCloudDrive\Documents\SunRav\Docs\tMaker.srbr
    </span>
    <label className="relative flex items-center">
      <Badge n={12} className="-left-[49px] -top-[11px]" />
      <input
        type="range"
        aria-label="Масштаб"
        defaultValue={16}
        className="h-[18px] w-[110px] appearance-none bg-transparent [&::-webkit-slider-runnable-track]:h-[2px] [&::-webkit-slider-runnable-track]:bg-[linear-gradient(to_right,#5bbcf0_20%,#c3d1de_20%)] [&::-webkit-slider-thumb]:-mt-2 [&::-webkit-slider-thumb]:size-[18px] [&::-webkit-slider-thumb]:appearance-none [&::-webkit-slider-thumb]:rounded-full [&::-webkit-slider-thumb]:bg-[#5bbcf0]"
      />
    </label>
    <output className="ml-[19px] font-[Roboto,sans-serif]">100%</output>
    <span className="ml-3 self-end pb-px">
      <Icon w={10} h={10}>
        <path d="M0 10L10 0M4 10l6-6M8 10l2-2" stroke="#a9b4bf" />
      </Icon>
    </span>
  </footer>
);

export default function App() {
  return (
    <div className="flex h-screen flex-col bg-white pb-[38px] pl-[82px] pr-[60px] pt-[60px] font-['Noto_Sans',sans-serif] text-xs text-black">
      <div className="flex min-h-0 flex-1 flex-col border border-[#bccad6] bg-[#dfe5ee]">
        <TitleBar />
        <MenuBar />
        <Ribbon />
        <div className="mx-[7px] flex min-h-0 flex-1 gap-[6px] border-b border-[#cfdae5] bg-[#edf2f7] pb-[6px] pr-[6px] pt-[6px]">
          <aside className="relative w-[26px] shrink-0">
            <Badge n={4} className="-left-[10px] top-[103px]" />
            <button
              type="button"
              className="h-[98px] border-l-[6px] border-[#7b7b7b] pl-[2px] leading-4 text-[#7d858c] [writing-mode:vertical-rl]"
            >
              Свойства главы
            </button>
          </aside>
          <ContentsPanel />
          <Center />
          <StylesPanel />
        </div>
        <StatusBar />
      </div>
    </div>
  );
}
